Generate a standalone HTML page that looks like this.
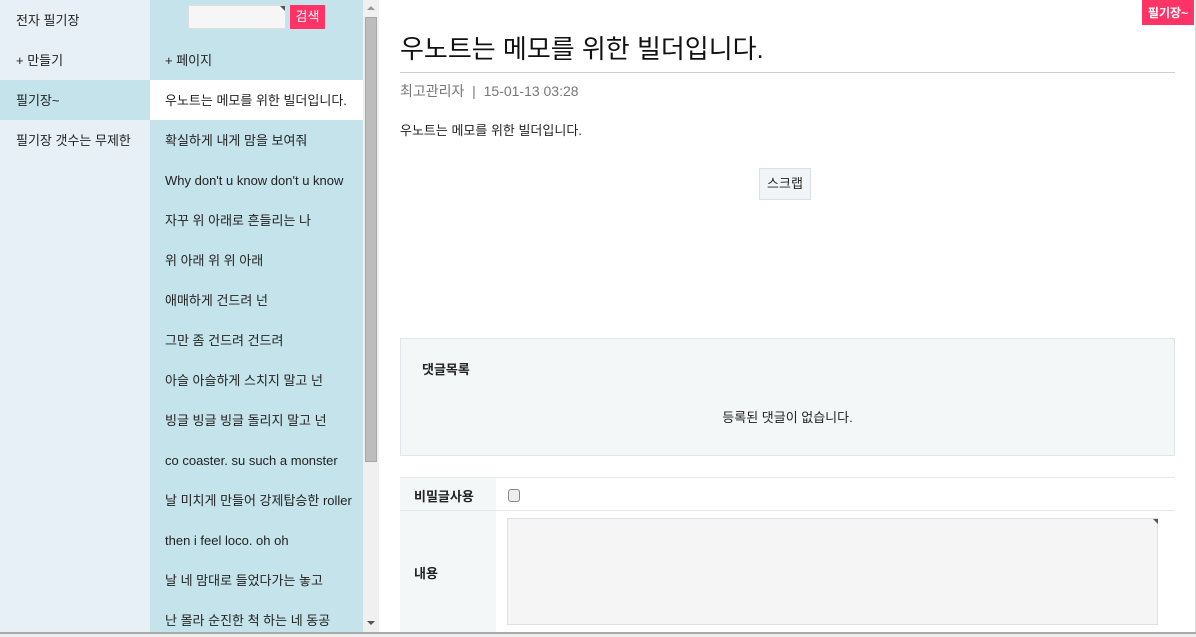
<!DOCTYPE html>
<html><head><meta charset="utf-8"><style>
*{margin:0;padding:0;box-sizing:border-box}
body{width:1196px;height:637px;overflow:hidden;background:#fff;font-family:"Liberation Sans","Noto Sans CJK KR",sans-serif;font-size:13px;color:#222;position:relative}
.left{position:absolute;left:0;top:0;width:150px;height:632px;background:#e8f0f7}
.left div{height:40px;line-height:42px;padding-left:16px}
.left .sel{background:#c5e3ea}
.mid{position:absolute;left:150px;top:0;width:213px;height:632px;background:#c5e3ea;overflow:hidden}
.mid div.i{height:40px;line-height:42px;padding-left:15px;white-space:nowrap}
.mid .sel{background:#fff}
.sb{position:absolute;left:363px;top:0;width:16px;height:632px;background:#f0f0f0}
.thumb{position:absolute;left:365px;top:17px;width:12px;height:445px;background:#bdbdbd;border:1px solid #a8a8a8}
.main{position:absolute;left:379px;top:0;width:816px;height:632px}
.abs{position:absolute}
</style></head><body>
<div class="left">
<div>전자 필기장</div><div>+ 만들기</div><div class="sel">필기장~</div><div>필기장 갯수는 무제한</div>
</div>
<div class="mid">
<div style="height:40px;position:relative">
<div class="abs" style="left:38px;top:5px;width:98px;height:24px;background:#f6f6f6;border:1px solid #ddd"></div>
<div class="abs" style="left:130px;top:6px;width:0;height:0;border-top:5px solid #555;border-left:5px solid transparent"></div>
<div class="abs" style="left:140px;top:5px;width:35px;height:24px;background:#ff3366;color:#fff;text-align:center;line-height:24px;font-size:13px">검색</div>
</div>
<div class="i">+ 페이지</div>
<div class="i sel">우노트는 메모를 위한 빌더입니다.</div>
<div class="i">확실하게 내게 맘을 보여줘</div>
<div class="i">Why don't u know don't u know</div>
<div class="i">자꾸 위 아래로 흔들리는 나</div>
<div class="i">위 아래 위 위 아래</div>
<div class="i">애매하게 건드려 넌</div>
<div class="i">그만 좀 건드려 건드려</div>
<div class="i">아슬 아슬하게 스치지 말고 넌</div>
<div class="i">빙글 빙글 빙글 돌리지 말고 넌</div>
<div class="i">co coaster. su such a monster</div>
<div class="i">날 미치게 만들어 강제탑승한 roller</div>
<div class="i">then i feel loco. oh oh</div>
<div class="i">날 네 맘대로 들었다가는 놓고</div>
<div class="i">난 몰라 순진한 척 하는 네 동공</div>
</div>
<div class="sb"></div>
<div class="abs" style="left:367px;top:6px;border-bottom:4px solid #999;border-left:4px solid transparent;border-right:4px solid transparent"></div>
<div class="abs" style="left:367px;top:621px;border-top:4px solid #555;border-left:4px solid transparent;border-right:4px solid transparent"></div>
<div class="thumb"></div>
<div class="main">
<div class="abs" style="right:1px;top:0;width:52px;height:25px;background:#ff3366;color:#fff;font-weight:bold;text-align:center;line-height:26px;font-size:12px">필기장~</div>
<div class="abs" style="left:21px;top:29px;font-size:26px;color:#111">우노트는 메모를 위한 빌더입니다.</div>
<div class="abs" style="left:21px;top:72px;width:775px;height:1px;background:#ccc"></div>
<div class="abs" style="left:21px;top:81px;font-size:14px;color:#777">최고관리자 &nbsp;|&nbsp; 15-01-13 03:28</div>
<div class="abs" style="left:21px;top:120px;font-size:13px">우노트는 메모를 위한 빌더입니다.</div>
<div class="abs" style="left:380px;top:168px;width:52px;height:32px;background:#f2f5f8;border:1px solid #dde;text-align:center;line-height:30px;font-size:13px">스크랩</div>
<div class="abs" style="left:21px;top:338px;width:775px;height:118px;background:#f3f7f8;border:1px solid #e0e6ea">
<div class="abs" style="left:21px;top:20px;font-weight:bold">댓글목록</div>
<div class="abs" style="left:0;width:100%;top:68px;text-align:center">등록된 댓글이 없습니다.</div>
</div>
<div class="abs" style="left:21px;top:477px;width:775px;height:1px;background:#e8e8e8"></div>
<div class="abs" style="left:21px;top:478px;width:96px;height:154px;background:#f3f7f8"></div>
<div class="abs" style="left:21px;top:510px;width:775px;height:1px;background:#e8e8e8"></div>
<div class="abs" style="left:35px;top:486px;font-weight:bold">비밀글사용</div>
<div class="abs" style="left:129px;top:489px;width:12px;height:13px;border:1px solid #888;border-radius:3px;background:#eee"></div>
<div class="abs" style="left:35px;top:563px;font-weight:bold">내용</div>
<div class="abs" style="left:128px;top:518px;width:651px;height:107px;background:#f5f5f5;border:1px solid #dde"></div>
<div class="abs" style="left:774px;top:519px;border-top:5px solid #555;border-left:5px solid transparent"></div>
</div>
<div class="abs" style="left:1195px;top:0;width:1px;height:632px;background:#ddd"></div>
<div class="abs" style="left:0;top:632px;width:1196px;height:5px;background:#eee;border-top:2px solid #aaa"></div>
</body></html>
